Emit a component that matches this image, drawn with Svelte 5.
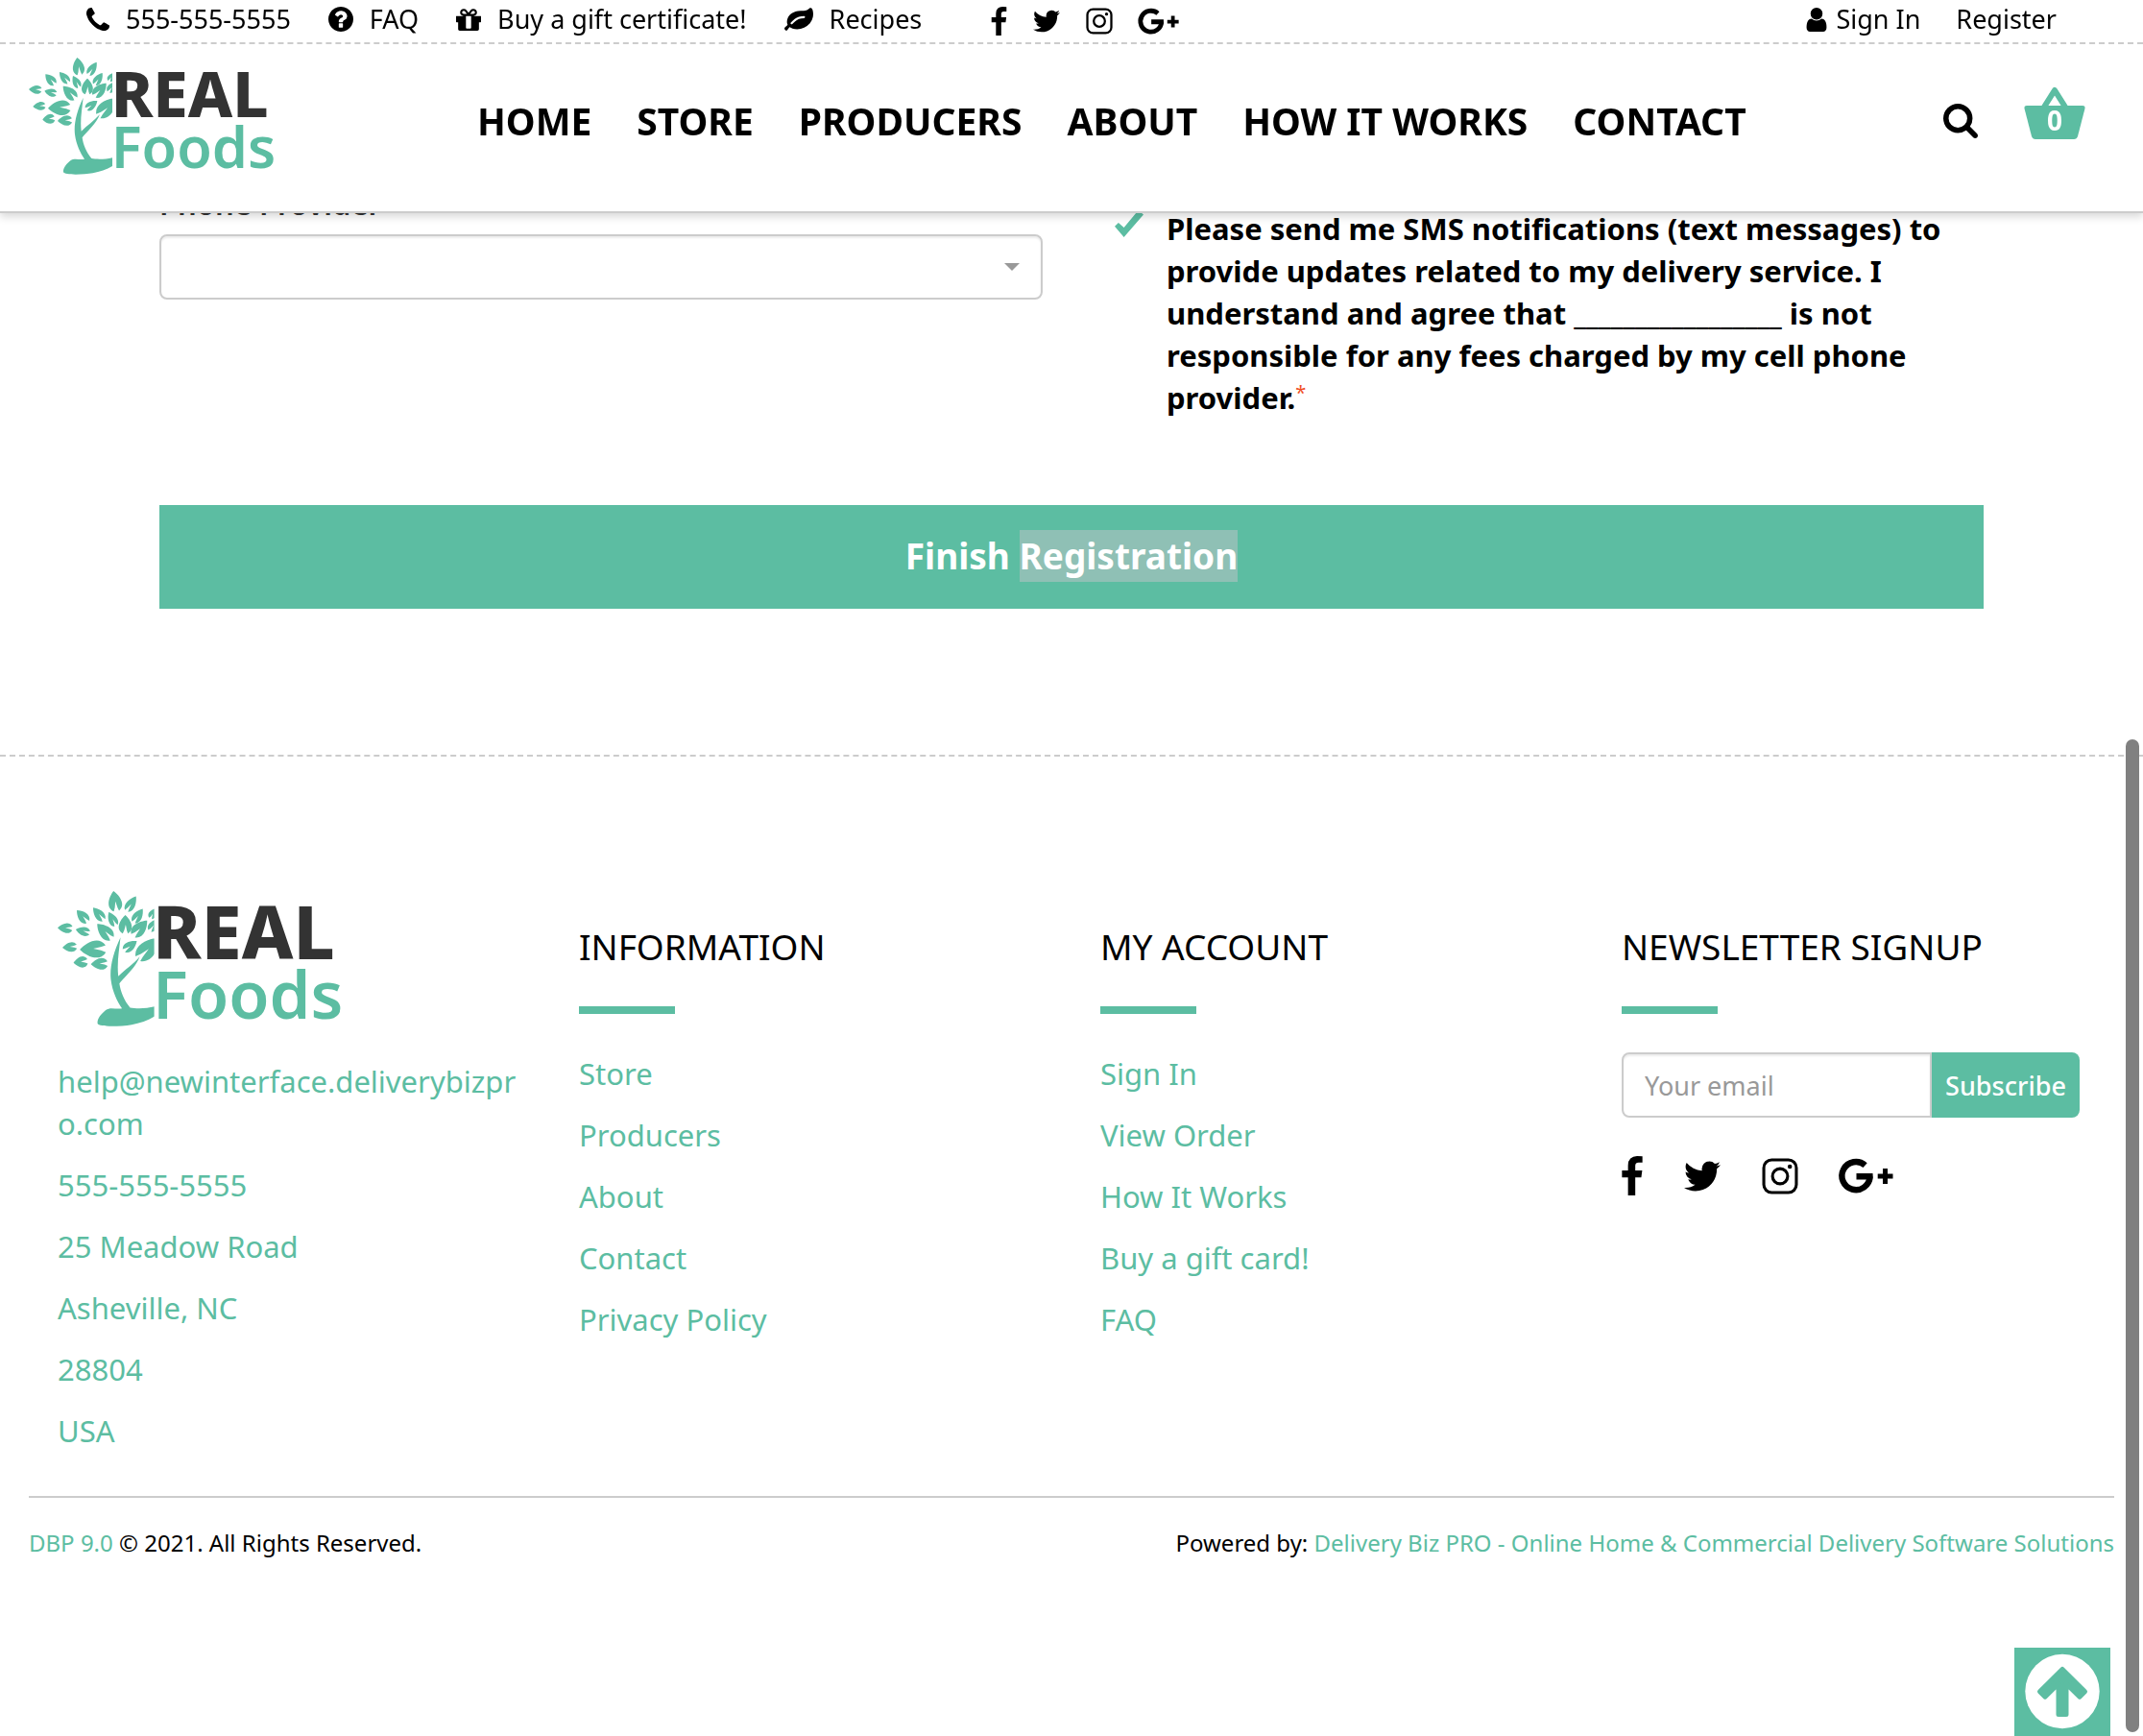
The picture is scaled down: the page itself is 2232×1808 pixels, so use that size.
<script>
  const icons = {
    phone: ['192 128 1408 1408', 'M1600 1240q0 27-10 70.5t-21 68.5q-21 50-122 106-94 51-186 51-27 0-53-3.5t-57.5-12.5-47-14.5-55.5-20.5-49-18q-98-35-175-83-127-79-264-216t-216-264q-48-77-83-175-3-9-18-49t-20.5-55.5-14.5-47-12.5-57.5-3.5-53q0-92 51-186 56-101 106-122 25-11 68.5-21t70.5-10q14 0 21 3 18 6 53 76 11 19 30 54t35 63.5 31 53.5q3 4 17.5 25t21.5 35.5 7 28.5q0 20-28.5 50t-62 55-62 53-28.5 46q0 9 5 22.5t8.5 20.5 14 24 11.5 19q76 137 174 235t235 174q2 1 19 11.5t24 14 20.5 8.5 22.5 5q18 0 46-28.5t53-62 55-62 50-28.5q14 0 28.5 7t35.5 21.5 25 17.5q25 15 53.5 31t63.5 35 54 30q70 35 76 53 3 7 3 21z'],
    help: ['128 128 1536 1536', 'M1024 1376v-192q0-14-9-23t-23-9h-192q-14 0-23 9t-9 23v192q0 14 9 23t23 9h192q14 0 23-9t9-23zm256-672q0-88-55.5-163t-138.5-116-170-41q-243 0-371 213-15 24 8 42l132 100q7 6 19 6 16 0 25-12 53-68 86-92 34-24 86-24 48 0 85.5 26t37.5 59q0 38-20 61t-68 45q-63 28-115.5 86.5t-52.5 125.5v36q0 14 9 23t23 9h192q14 0 23-9t9-23q0-19 21.5-49.5t54.5-49.5q32-18 49-28.5t46-35 44.5-48 28-60.5 12.5-81zm384 192q0 209-103 385.5t-279.5 279.5-385.5 103-385.5-103-279.5-279.5-103-385.5 103-385.5 279.5-279.5 385.5-103 385.5 103 279.5 279.5 103 385.5z'],
    gift: ['128 192 1536 1344', 'M1056 1356v-716h-320v716q0 25 18 38.5t46 13.5h192q28 0 46-13.5t18-38.5zm-456-844h195l-126-161q-26-31-69-31-40 0-68 28t-28 68 28 68 68 28zm688-96q0-40-28-68t-68-28q-43 0-69 31l-125 161h194q40 0 68-28t28-68zm376 256v320q0 14-9 23t-23 9h-96v416q0 40-28 68t-68 28h-1088q-40 0-68-28t-28-68v-416h-96q-14 0-23-9t-9-23v-320q0-14 9-23t23-9h440q-93 0-158.5-65.5t-65.5-158.5 65.5-158.5 158.5-65.5q107 0 168 77l128 165 128-165q61-77 168-77 93 0 158.5 65.5t65.5 158.5-65.5 158.5-158.5 65.5h440q14 0 23 9t9 23z'],
    leaf: ['0 128 1792 1408', 'M1280 704q0-26-19-45t-45-19q-172 0-318 49.5t-259.5 134-235.5 219.5q-19 21-19 45 0 26 19 45t45 19q24 0 45-19 27-24 74-71t67-66q137-124 268.5-176t313.5-52q26 0 45-19t19-45zm512-198q0 95-20 193-46 224-184.5 383t-357.5 268q-214 108-438 108-148 0-286-47-15-5-88-42t-96-37q-16 0-39.5 32t-45 70-52.5 70-60 32q-43 0-63.5-17.5t-45.5-59.5q-2-4-6-11t-5.5-10-3-9.5-1.5-13.5q0-35 31-73.5t68-65.5 68-56 31-48q0-4-14-38t-16-44q-9-51-9-104 0-115 43.5-220t119-184.5 170.5-139 204-95.5q55-18 145-25.5t179.5-9 178.5-6 163.5-24 113.5-56.5l29.5-29.5 29.5-28 27-20 36.5-16 43.5-4.5q39 0 70.5 46t47.5 112 24 124 8 96z'],
    user: ['256 128 1280 1536', 'M1536 1399q0 109-62.5 187t-150.5 78h-854q-88 0-150.5-78t-62.5-187q0-85 8.5-160.5t31.5-152 58.5-131 94-89 134.5-34.5q131 128 313 128t313-128q76 0 134.5 34.5t94 89 58.5 131 31.5 152 8.5 160.5zm-256-887q0 159-112.5 271.5t-271.5 112.5-271.5-112.5-112.5-271.5 112.5-271.5 271.5-112.5 271.5 112.5 112.5 271.5z'],
    search: ['64 128 1664 1664', 'M1216 832q0-185-131.5-316.5t-316.5-131.5-316.5 131.5-131.5 316.5 131.5 316.5 316.5 131.5 316.5-131.5 131.5-316.5zm512 832q0 52-38 90t-90 38q-54 0-90-38l-343-342q-179 124-399 124-143 0-273.5-55.5t-225-150-150-225-55.5-273.5 55.5-273.5 150-225 225-150 273.5-55.5 273.5 55.5 225 150 150 225 55.5 273.5q0 220-124 399l343 343q37 37 37 90z'],
    facebook: ['479 0 864 1664', 'M1343 12v264h-157q-86 0-116 36t-30 108v189h293l-39 296h-254v759h-306v-759h-255v-296h255v-218q0-186 104-288.5t277-102.5q147 0 228 12z'],
    twitter: ['108 256 1576 1280', 'M1684 408q-67 98-162 167 1 14 1 42 0 130-38 259.5t-115.5 248.5-184.5 210.5-258 146-323 54.5q-271 0-496-145 35 4 78 4 225 0 401-138-105-2-188-64.5t-114-159.5q33 5 61 5 43 0 85-11-112-23-185.5-111.5t-73.5-205.5v-4q68 38 146 41-66-44-105-115t-39-154q0-88 44-163 121 149 294.5 238.5t371.5 99.5q-8-38-8-74 0-134 94.5-228.5t228.5-94.5q140 0 236 102 109-21 205-78-37 115-142 178 93-10 186-50z']
  };

  // Each leaf: tip x, tip y, base x, base y, width
  const leaves = [
    [181, 28, 189, 82, 36], [242, 42, 216, 82, 25], [82, 80, 112, 112, 27], [126, 73, 155, 107, 25],
    [168, 85, 188, 122, 24], [260, 76, 235, 113, 25], [293, 76, 281, 102, 20], [213, 93, 213, 143, 35],
    [30, 127, 70, 129, 26], [79, 132, 117, 141, 24], [137, 117, 177, 157, 34], [272, 108, 234, 149, 34],
    [300, 104, 279, 136, 24], [43, 181, 82, 178, 26], [90, 186, 160, 184, 46], [73, 222, 111, 218, 30],
    [120, 226, 165, 224, 31], [244, 163, 209, 189, 26], [306, 154, 247, 211, 46]
  ];

  function leafPath([tx, ty, bx, by, w]) {
    const dx = tx - bx, dy = ty - by, len = Math.hypot(dx, dy);
    const nx = -dy / len, ny = dx / len;
    const at = (along, side) => `${(bx + dx * along + nx * w * side).toFixed(1)} ${(by + dy * along + ny * w * side).toFixed(1)}`;
    return `M${at(1, 0)}C${at(0.75, 0.4)} ${at(0.25, 0.8)} ${at(0, 0.2)}L${at(0.16, 0.12)} ${at(0.48, 0.03)} ${at(0.18, -0.08)} ${at(0, -0.2)}C${at(0.25, -0.8)} ${at(0.75, -0.4)} ${at(1, 0)}Z`;
  }

  const topLinks = [
    ['phone', '555-555-5555'], ['help', 'FAQ'], ['gift', 'Buy a gift certificate!'], ['leaf', 'Recipes']
  ];
  const nav = ['HOME', 'STORE', 'PRODUCERS', 'ABOUT', 'HOW IT WORKS', 'CONTACT'];
  const contact = ['help@newinterface.deliverybizpro.com', '555-555-5555', '25 Meadow Road', 'Asheville, NC', '28804', 'USA'];
  const columns = [
    ['INFORMATION', ['Store', 'Producers', 'About', 'Contact', 'Privacy Policy']],
    ['MY ACCOUNT', ['Sign In', 'View Order', 'How It Works', 'Buy a gift card!', 'FAQ']]
  ];
</script>

{#snippet icon(name)}
  <svg class="icon {name}" viewBox={icons[name][0]} aria-hidden="true"><path d={icons[name][1]} /></svg>
{/snippet}

{#snippet logo()}
  <svg class="logo" viewBox="30 28 768 366" role="img" aria-label="Real Foods">
    <clipPath id="tree-edge"><rect x="30" y="28" width="261" height="366" /></clipPath>
    <g class="green" clip-path="url(#tree-edge)">
      {#each leaves as l}<path d={leafPath(l)} />{/each}
      <path d="M200 153C180 195 170 235 174 268C178 300 192 328 204 345C190 349 172 340 160 350C148 360 136 374 138 386C142 396 200 394 230 389C252 385 275 378 293 366V340C270 346 242 346 226 343C210 325 200 300 197 278C212 258 240 236 252 205C234 226 212 240 194 258C190 222 196 190 200 153Z" />
    </g>
    <text class="real" x="287" y="213">REAL</text>
    <text class="foods" x="287" y="373">Foods</text>
  </svg>
{/snippet}

{#snippet social()}
  <a href="#facebook" aria-label="Facebook">{@render icon('facebook')}</a>
  <a href="#twitter" aria-label="Twitter">{@render icon('twitter')}</a>
  <a href="#instagram" aria-label="Instagram">
    <svg class="icon instagram" viewBox="0 0 37 37" aria-hidden="true">
      <rect class="line" x="2" y="2" width="33" height="33" rx="8" />
      <circle class="line" cx="18.5" cy="18.5" r="7.7" />
      <circle cx="28.4" cy="8.8" r="2.2" />
    </svg>
  </a>
  <a href="#google" aria-label="Google Plus">
    <svg class="icon google" viewBox="0 0 56 36" aria-hidden="true">
      <path class="ring" d="M26.6 6.6A14.6 14.6 0 1 0 31.6 18.4" />
      <path d="M17.5 15H34.5Q35 18 34.2 21.6H17.5Z" />
      <path d="M45 10H50V15.500H55.500V20.500H50V26H45V20.500H39.700V15.500H45Z" />
    </svg>
  </a>
{/snippet}

<header>
  <div class="topbar">
    <div class="quick">
      {#each topLinks as [name, label]}
        <a href="#{name}">{@render icon(name)}{label}</a>
      {/each}
    </div>
    <div class="social small">{@render social()}</div>
    <div class="account">
      <a class="signin" href="#signin">{@render icon('user')}Sign In</a>
      <a href="#register">Register</a>
    </div>
  </div>
  <div class="mainbar">
    <a class="brand" href="#home">{@render logo()}</a>
    <nav>
      {#each nav as item}<a href="#nav">{item}</a>{/each}
    </nav>
    <button class="search-button" aria-label="Search">{@render icon('search')}</button>
    <a class="basket" href="#cart" aria-label="Cart, 0 items">
      <svg viewBox="0 0 64 56" aria-hidden="true">
        <path class="handle" d="M20 24L32 5L44 24" />
        <path class="green" d="M3 21H61Q64 21 63.500 24L56 53Q55 56 52 56H12Q9 56 8 53L0.500 24Q0 21 3 21Z" />
      </svg>
      <span>0</span>
    </a>
  </div>
</header>

<main>
  <form>
    <div class="fields">
      <div class="field">
        <label for="provider">Phone Provider</label>
        <div class="select"><select id="provider"><option></option></select></div>
      </div>
      <div class="consent">
        <input id="sms" type="checkbox" checked />
        <label for="sms">Please send me SMS notifications (text messages) to provide updates related to my delivery service. I understand and agree that _________________ is not responsible for any fees charged by my cell phone provider.<sup>*</sup></label>
      </div>
    </div>
    <button class="finish" type="button">Finish <mark>Registration</mark></button>
  </form>
</main>

<footer>
  <div class="columns">
    <section class="company">
      <a href="#home">{@render logo()}</a>
      <ul>
        {#each contact as line}<li><a href="#contact">{line}</a></li>{/each}
      </ul>
    </section>
    {#each columns as [title, links]}
      <section>
        <h2>{title}</h2>
        <ul>
          {#each links as link}<li><a href="#link">{link}</a></li>{/each}
        </ul>
      </section>
    {/each}
    <section>
      <h2>NEWSLETTER SIGNUP</h2>
      <form class="subscribe">
        <input type="email" placeholder="Your email" aria-label="Your email" />
        <button type="button">Subscribe</button>
      </form>
      <div class="social">{@render social()}</div>
    </section>
  </div>
  <div class="legal">
    <span><a href="#dbp">DBP 9.0</a> © 2021. All Rights Reserved.</span>
    <span>Powered by: <a href="#powered">Delivery Biz PRO - Online Home &amp; Commercial Delivery Software Solutions</a></span>
  </div>
</footer>

<button class="to-top" aria-label="Back to top">
  <svg viewBox="0 0 100 92" aria-hidden="true">
    <circle cx="50" cy="45.500" r="38.700" />
    <path d="M50 22.500L73.500 45.700L68 51.200L54 37.500V69.500H46V37.500L32 51.200L26.500 45.700Z" />
  </svg>
</button>
<div class="scroll-thumb"></div>

<style>
  :global(body) {
    background: #fff;
    color: #000;
    font-family: "Noto Sans", "Open Sans", sans-serif;
    font-size: 27px;
  }
  a { color: inherit; text-decoration: none; }
  button { font-family: inherit; border: 0; padding: 0; cursor: pointer; }
  svg { display: block; flex: none; overflow: visible; }
  ul { list-style: none; margin: 0; padding: 0; }
  .green { fill: #5cbda2; }

  header {
    position: fixed;
    inset: 0 0 auto;
    z-index: 2;
    background: #fff;
    border-bottom: 2px solid #ccc;
    box-shadow: 0 4px 8px rgba(0, 0, 0, 0.15);
  }
  .topbar {
    display: flex;
    align-items: center;
    height: 44px;
    padding: 0 90px;
    border-bottom: 2px dashed #ccc;
    line-height: 40px;
  }
  .topbar .quick, .topbar .account { display: flex; padding-bottom: 4px; }
  .topbar .quick { gap: 39px; }
  .topbar .quick a { display: flex; align-items: center; gap: 17px; }
  .topbar .account { gap: 37px; margin-left: auto; }
  .signin { display: flex; align-items: center; gap: 9px; }
  .phone { width: 24px; height: 24px; }
  .help { width: 26px; height: 26px; }
  .gift { width: 26px; height: 23px; }
  .leaf { width: 30px; height: 24px; }
  .user { width: 22px; height: 25px; }

  .social { display: flex; align-items: center; gap: 43px; }
  .facebook { width: 22px; height: 41px; }
  .twitter { width: 38px; height: 32px; }
  .instagram { width: 38px; height: 38px; }
  .google { width: 56px; height: 36px; }
  .line { fill: none; stroke: #000; stroke-width: 3; }
  .ring { fill: none; stroke: #000; stroke-width: 6.4; }
  .social.small { gap: 27px; margin-left: 72px; }
  .small .facebook { width: 17px; height: 30px; }
  .small .twitter { width: 28px; height: 24px; }
  .small .instagram { width: 28px; height: 28px; }
  .small .google { width: 42px; height: 27px; }

  .mainbar {
    display: flex;
    align-items: center;
    height: 174px;
    padding: 0 60px 0 30px;
  }
  .brand { align-self: flex-start; padding-top: 14px; }
  .brand .logo { width: 256px; }
  .real { font: 800 197px "Noto Sans", sans-serif; fill: #333; }
  .foods { font: 600 178px "Noto Sans", sans-serif; fill: #5cbda2; }
  nav {
    display: flex;
    gap: 47px;
    margin-left: 211px;
    padding-bottom: 14px;
    font-size: 39px;
    font-weight: 700;
    line-height: 52px;
    white-space: nowrap;
  }
  .search-button { margin-left: auto; padding-bottom: 14px; background: none; }
  .search { width: 36px; height: 36px; }
  .basket { position: relative; width: 64px; margin-left: 48px; padding-bottom: 32px; }
  .handle { fill: none; stroke: #5cbda2; stroke-width: 6; stroke-linejoin: round; }
  .basket span {
    position: absolute;
    inset: 20px 0 auto;
    color: #fff;
    font-size: 28px;
    font-weight: 700;
    line-height: 32px;
    text-align: center;
  }

  main { padding: 190px 166px 0; border-bottom: 2px dashed #ccc; }
  main form { padding-bottom: 152px; }
  .fields { display: grid; grid-template-columns: 1fr 1fr; gap: 60px; }
  .field label { display: block; font-size: 31px; font-weight: 600; line-height: 44px; color: #333; }
  .select { position: relative; margin-top: 10px; }
  .select::after {
    content: "";
    position: absolute;
    top: 30px;
    right: 24px;
    border: 8px solid transparent;
    border-top-color: #999;
    border-bottom: 0;
  }
  select {
    display: block;
    appearance: none;
    width: 100%;
    height: 68px;
    border: 2px solid #ccc;
    border-radius: 8px;
    background: #fff;
    box-shadow: inset 0 2px 2px rgba(0, 0, 0, 0.075);
  }
  .consent {
    display: flex;
    align-items: flex-start;
    gap: 24px;
    padding: 26px 0 0 15px;
    font-size: 31px;
    font-weight: 700;
    line-height: 44px;
  }
  .consent input {
    appearance: none;
    flex: none;
    width: 30px;
    height: 28px;
    margin: 3px 0 0;
    background: #5cbda2;
    clip-path: polygon(0 60%, 13% 46%, 32% 64%, 82% 0, 100% 16%, 32% 100%);
  }
  sup { color: #f04e23; font-size: 20px; font-weight: 400; line-height: 0; vertical-align: 10px; }
  .finish {
    display: block;
    width: 100%;
    height: 108px;
    margin-top: 90px;
    padding-bottom: 2px;
    background: #5cbda2;
    color: #fff;
    font-size: 37px;
    font-weight: 700;
    line-height: 54px;
  }
  mark { display: inline-block; background: #8fc0b5; color: inherit; }

  footer { padding: 140px 30px 0; }
  .columns { display: grid; grid-template-columns: repeat(4, minmax(0, 1fr)); border-bottom: 2px solid #ccc; }
  section { padding: 0 30px 26px; }
  .company .logo { width: 296px; }
  .company ul { margin-top: 35px; }
  li { margin-bottom: 20px; font-size: 31px; font-weight: 400; line-height: 44px; color: #5cbda2; overflow-wrap: anywhere; }
  h2 { margin: 33px 0 40px; font-size: 37px; font-weight: 400; line-height: 50px; white-space: nowrap; }
  h2::after { content: ""; display: block; width: 100px; height: 8px; margin-top: 37px; background: #5cbda2; }
  .subscribe { display: flex; margin-right: 6px; }
  .subscribe input {
    flex: 1;
    min-width: 0;
    box-sizing: border-box;
    height: 68px;
    padding: 0 22px;
    border: 2px solid #ccc;
    border-radius: 8px 0 0 8px;
    font: 400 27px "Noto Sans", sans-serif;
    box-shadow: inset 0 2px 2px rgba(0, 0, 0, 0.075);
  }
  .subscribe input::placeholder { color: #999; }
  .subscribe button { width: 154px; border-radius: 0 8px 8px 0; background: #5cbda2; color: #fff; font-size: 27px; font-weight: 500; }
  section .social { margin-top: 40px; }
  .legal { display: flex; justify-content: space-between; padding-top: 28px; font-size: 24px; line-height: 38px; }
  .legal a { color: #5cbda2; }

  .to-top { position: fixed; right: 34px; bottom: 0; width: 100px; height: 92px; background: #5cbda2; }
  .to-top circle { fill: #fff; }
  .to-top path { fill: #5cbda2; stroke: #5cbda2; stroke-width: 5; stroke-linejoin: round; }
  .scroll-thumb { position: fixed; z-index: 3; top: 770px; right: 4px; bottom: 4px; width: 14px; border-radius: 7px; background: #808080; }
</style>
